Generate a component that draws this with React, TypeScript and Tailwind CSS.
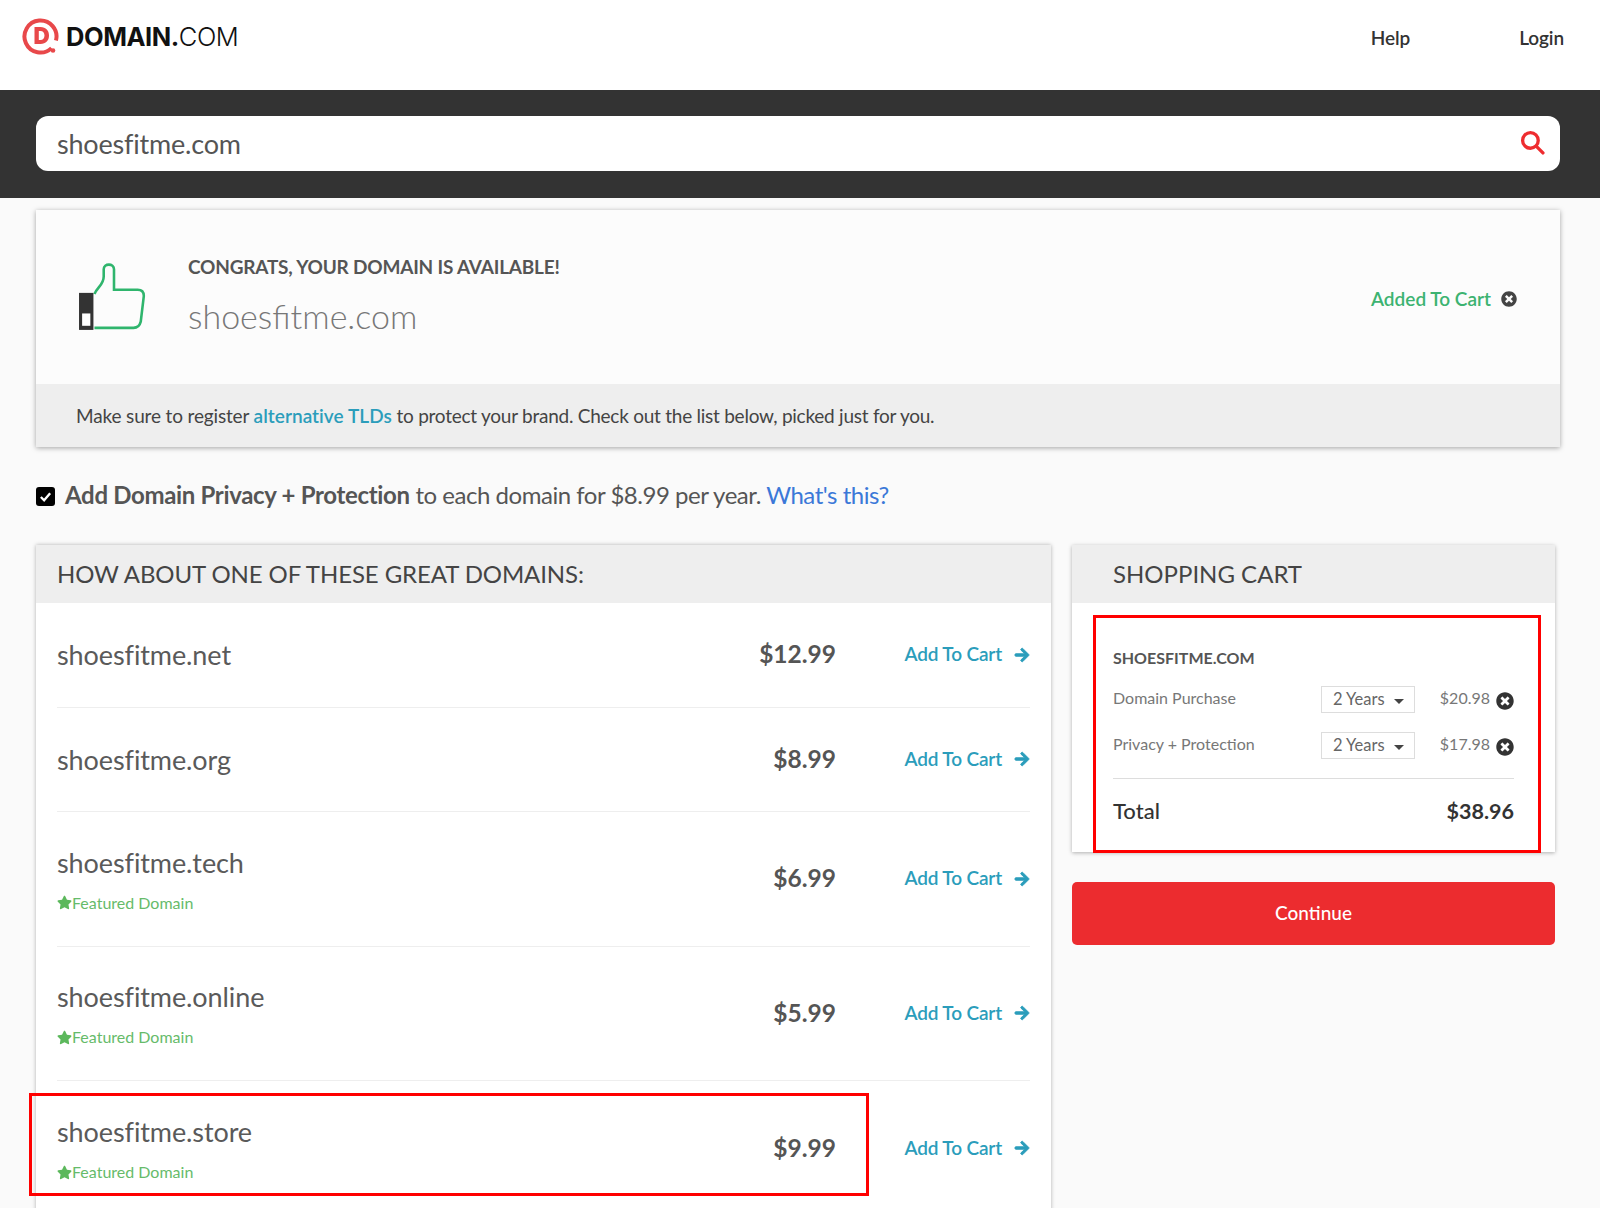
import React, { FC } from "react";
import { FaArrowRight, FaStar, FaTimesCircle } from "react-icons/fa";

const Logo: FC = () => (
  <div className="flex items-center gap-[7px]">
    <svg className="w-[37px] h-[37px]" viewBox="0 0 37 37">
      <path d="M29.500 30.100A16 16 0 1 1 34 22.400" fill="none" stroke="#e8484a" strokeWidth="4" />
      <path
        fillRule="evenodd"
        d="M12.500 9h6c5.500 0 8.500 3.600 8.500 8.500S24 26 18.500 26h-6zM16.800 13v9h1.700c2.500 0 4-1.800 4-4.500S21 13 18.500 13z"
        fill="#e8484a"
      />
      <circle cx="31" cy="32.500" r="2.300" fill="#e8484a" />
    </svg>
    <span className="text-[25.500px] leading-none text-[#111111] tracking-[-0.45px] font-['Inter',sans-serif]">
      <span className="font-bold">DOMAIN.</span>
      <span className="font-light">COM</span>
    </span>
  </div>
);

const Thumb: FC = () => (
  <svg className="w-[72px] h-[70px]" viewBox="0 0 70 68">
    <path
      d="M16 31c3-7 9-9 9-17V7c0-6 10-6 10 0v20h23c4 0 6 2 6 6l-3 25c-1 4-3 6-7 6H16"
      fill="none"
      stroke="#2fb56d"
      strokeWidth="2.500"
    />
    <rect x="1" y="30" width="14" height="36" fill="#333333" />
    <rect x="4" y="50" width="8" height="12" fill="#ffffff" />
  </svg>
);

const Caret: FC = () => (
  <span className="w-0 h-0 border-x-[5px] border-x-transparent border-t-[5px] border-t-[#444444] mt-[3px]" />
);

const YearSelect: FC = () => (
  <div className="w-[94px] h-[27px] border border-[#dddddd] bg-white flex items-center justify-between pl-[11px] pr-[10px] text-[16.500px] text-[#666666]">
    2 Years
    <Caret />
  </div>
);

const AddToCart: FC = () => (
  <a className="flex items-center gap-[12px] text-[#2b9dbb] text-[19px] font-semibold tracking-[-0.15px] w-[127px] shrink-0 justify-end whitespace-nowrap">
    Add To Cart
    <FaArrowRight className="w-[16px] h-[16px] shrink-0 stroke-current stroke-[30]" />
  </a>
);

type Domain = { name: string; price: string; featured?: boolean; height: string };

const domains: Domain[] = [
  { name: "shoesfitme.net", price: "$12.99", height: "h-[105px]" },
  { name: "shoesfitme.org", price: "$8.99", height: "h-[104px]" },
  { name: "shoesfitme.tech", price: "$6.99", featured: true, height: "h-[135px]" },
  { name: "shoesfitme.online", price: "$5.99", featured: true, height: "h-[134px]" },
  { name: "shoesfitme.store", price: "$9.99", featured: true, height: "h-[135px]" },
];

const DomainRow: FC<{ domain: Domain; last: boolean }> = ({ domain, last }) => (
  <div className={`flex items-center justify-between ${domain.height} ${last ? "" : "border-b border-[#eeeeee]"}`}>
    <div className="flex flex-col">
      <span className="text-[27px] leading-[34px] tracking-[-0.1px] text-[#5a5a5a]">{domain.name}</span>
      {domain.featured && (
        <span className="flex items-center mt-[13px] text-[16px] leading-[20px] text-[#66bb6a]">
          <FaStar className="w-[15px] h-[15px] shrink-0 text-[#5cb85c]" />
          Featured Domain
        </span>
      )}
    </div>
    <div className="flex items-center gap-[67px] -mt-[1px]">
      <span className="text-[24.500px] font-bold text-[#555555]">{domain.price}</span>
      <AddToCart />
    </div>
  </div>
);

const CartLine: FC<{ label: string; price: string }> = ({ label, price }) => (
  <div className="flex items-start h-[46px]">
    <span className="w-[208px] text-[16px] leading-[24px] text-[#777777]">{label}</span>
    <YearSelect />
    <span className="ml-[25px] text-[16px] leading-[24px] text-[#777777]">{price}</span>
    <FaTimesCircle className="w-[18px] h-[18px] ml-[6px] mt-[6px] text-[#333333]" />
  </div>
);

export default function App() {
  return (
    <div className="relative h-[1208px] overflow-hidden bg-[#fafafa] font-['Lato',sans-serif]">
      {/* HEADER */}
      <div className="h-[90px] bg-white flex items-start justify-between pl-[22px] pr-[36px]">
        <div className="pt-[18px]">
          <Logo />
        </div>
        <div className="flex gap-[109px] pt-[24px] text-[19px] font-semibold tracking-[-0.1px] text-[#333333]">
          <a>Help</a>
          <a>Login</a>
        </div>
      </div>

      {/* SEARCH */}
      <div className="h-[108px] bg-[#333333] pl-[36px] pr-[40px] flex items-center">
        <div className="w-full h-[55px] -mt-[1px] bg-white rounded-[12px] flex items-center justify-between pl-[21px] pr-[15px]">
          <span className="text-[27px] pt-[2px] tracking-[-0.2px] text-[#555555]">shoesfitme.com</span>
          <svg className="w-[25px] h-[25px] -mt-[3px]" viewBox="0 0 24 24" fill="none" stroke="#ee2c2f" strokeWidth="3.200" strokeLinecap="round">
            <circle cx="10" cy="10" r="7.500" />
            <path d="M16 16l6 6" />
          </svg>
        </div>
      </div>

      <div className="pl-[36px] pr-[40px]">
        {/* CONGRATS */}
        <div className="mt-[12px] shadow-[0_1px_5px_rgba(0,0,0,0.35)] bg-[#fcfcfc]">
          <div className="h-[174px] flex items-center justify-between pl-[42px] pr-[43px]">
            <div className="flex items-center gap-[38px]">
              <Thumb />
              <div className="flex flex-col -mt-[2px]">
                <span className="text-[19px] leading-[24px] font-bold tracking-[-0.2px] text-[#555555]">
                  CONGRATS, YOUR DOMAIN IS AVAILABLE!
                </span>
                <span className="text-[34px] leading-[42px] mt-[16px] font-light text-[#777777]">shoesfitme.com</span>
              </div>
            </div>
            <div className="flex items-center gap-[10px] mt-[4px]">
              <span className="text-[19px] font-semibold text-[#3cb371]">Added To Cart</span>
              <FaTimesCircle className="w-[16px] h-[16px] text-[#444444]" />
            </div>
          </div>
          <div className="h-[63px] bg-[#eeeeee] flex items-center pl-[40px] pt-[2px] text-[19px] tracking-[-0.15px] text-[#444444]">
            <p>
              Make sure to register{" "}
              <a className="text-[#2b9dbb] font-semibold tracking-[0.05px]">alternative TLDs</a>{" "}
              <span className="tracking-[-0.25px]">
                to protect your brand. Check out the list below, picked just for you.
              </span>
            </p>
          </div>
        </div>

        {/* PRIVACY */}
        <div className="mt-[32px] flex items-center gap-[10px] h-[32px] text-[24px] tracking-[-0.47px] text-[#555555]">
          <span className="w-[19px] h-[19px] rounded-[3px] bg-black flex items-center justify-center mt-[3px]">
            <svg className="w-[13px] h-[13px]" viewBox="0 0 14 14" fill="none" stroke="#ffffff" strokeWidth="2.500">
              <path d="M2 7.500l3.500 3.500L12 3.500" />
            </svg>
          </span>
          <p>
            <span className="font-bold tracking-[-0.33px]">Add Domain Privacy + Protection</span> to each domain for
            $8.99 per year. <a className="text-[#3b78d8]">What's this?</a>
          </p>
        </div>

        <div className="mt-[34px] flex items-start">
          {/* DOMAIN LIST */}
          <div className="w-[1015px] shrink-0 bg-white shadow-[0_0_4px_rgba(0,0,0,0.3)]">
            <div className="h-[58px] bg-[#eeeeee] flex items-center pl-[21px] text-[24px] tracking-[-0.1px] text-[#444444]">
              HOW ABOUT ONE OF THESE GREAT DOMAINS:
            </div>
            <div className="px-[21px]">
              {domains.map((domain, i) => (
                <DomainRow key={domain.name} domain={domain} last={i === domains.length - 1} />
              ))}
            </div>
          </div>

          {/* CART */}
          <div className="w-[483px] ml-[21px] shrink-0 flex flex-col">
            <div className="bg-white shadow-[0_1px_4px_rgba(0,0,0,0.3)]">
              <div className="h-[58px] bg-[#eeeeee] flex items-center pl-[41px] text-[24px] text-[#444444]">
                SHOPPING CART
              </div>
              <div className="pl-[41px] pr-[41px] pt-[43px] h-[249px]">
                <div className="text-[16px] leading-[24px] font-bold text-[#555555]">SHOESFITME.COM</div>
                <div className="mt-[16px]">
                  <CartLine label="Domain Purchase" price="$20.98" />
                  <CartLine label="Privacy + Protection" price="$17.98" />
                </div>
                <div className="border-t border-[#dddddd] pt-[15px] flex justify-between text-[22px] leading-[34px] font-medium text-[#333333]">
                  <span>Total</span>
                  <span className="font-bold text-[21.500px]">$38.96</span>
                </div>
              </div>
            </div>
            <button className="mt-[30px] h-[63px] rounded-[5px] bg-[#ec2c2f] text-white text-[19px] font-medium">
              Continue
            </button>
          </div>
        </div>
      </div>

      {/* highlight boxes drawn over the page */}
      <div className="absolute left-[1093px] top-[615px] w-[448px] h-[238px] border-[3px] border-[#ff0000]" />
      <div className="absolute left-[29px] top-[1093px] w-[840px] h-[103px] border-[3px] border-[#ff0000]" />
    </div>
  );
}
